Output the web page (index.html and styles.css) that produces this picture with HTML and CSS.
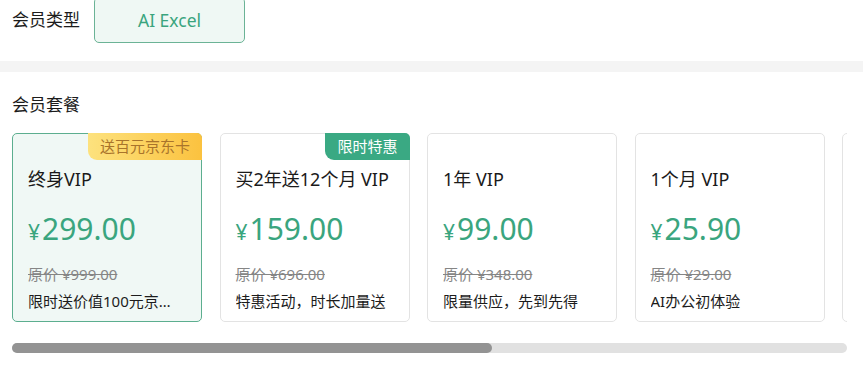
FILE: index.html
```html
<!DOCTYPE html>
<html lang="zh-CN">
<head>
<meta charset="utf-8">
<link rel="stylesheet" href="styles.css">
</head>
<body>
<div class="type-row">
  <span class="label">会员类型</span>
  <button class="type-btn">AI Excel</button>
</div>
<div class="band"></div>
<section class="plans">
  <div class="label plans-label">会员套餐</div>
  <div class="cards">
    <div class="card active">
      <span class="badge badge-gold">送百元京东卡</span>
      <div class="title">终身VIP</div>
      <div class="price"><span class="yen">¥</span>299.00</div>
      <div class="orig">原价 ¥999.00</div>
      <div class="desc">限时送价值100元京东卡</div>
    </div>
    <div class="card">
      <span class="badge badge-green">限时特惠</span>
      <div class="title">买2年送12个月 VIP</div>
      <div class="price"><span class="yen">¥</span>159.00</div>
      <div class="orig">原价 ¥696.00</div>
      <div class="desc">特惠活动，时长加量送</div>
    </div>
    <div class="card">
      <div class="title">1年 VIP</div>
      <div class="price"><span class="yen">¥</span>99.00</div>
      <div class="orig">原价 ¥348.00</div>
      <div class="desc">限量供应，先到先得</div>
    </div>
    <div class="card">
      <div class="title">1个月 VIP</div>
      <div class="price"><span class="yen">¥</span>25.90</div>
      <div class="orig">原价 ¥29.00</div>
      <div class="desc">AI办公初体验</div>
    </div>
    <div class="card card-edge"></div>
  </div>
  <div class="scroll-track"><div class="scroll-thumb"></div></div>
</section>
</body>
</html>
```
FILE: styles.css
```css
* { box-sizing: border-box; }

body {
  margin: 0;
  background: #fff;
  font-family: "Noto Sans", "Noto Sans CJK SC", sans-serif;
  color: #1c1c1c;
  overflow: hidden;
}

.type-row {
  display: flex;
  align-items: center;
  gap: 14px;
  height: 46px;
  margin-top: -3px;
  padding: 0 12px;
}

.label {
  font-size: 17px;
  line-height: 24px;
  color: #1c1c1c;
}

.type-btn {
  width: 151px;
  height: 46px;
  border: 1px solid #6bb396;
  border-radius: 5px;
  background: #eff8f4;
  color: #3aa57e;
  font-family: inherit;
  font-size: 17.5px;
  padding: 0;
}

.band {
  height: 11px;
  margin-top: 18px;
  background: #f4f4f4;
}

.plans {
  padding: 21px 0 0 0;
}

.plans-label {
  padding-left: 12px;
}

.cards {
  display: flex;
  gap: 17.5px;
  overflow: hidden;
  margin: 16px 16px 0 12px;
}

.card {
  position: relative;
  flex: 0 0 190px;
  height: 189px;
  border: 1px solid #e3e3e3;
  border-radius: 5px;
  background: #fff;
  padding: 33px 0 0 15px;
  display: flex;
  flex-direction: column;
}

.card.active {
  border-color: #5cae8f;
  background: #f0f8f5;
}

.badge {
  position: absolute;
  top: -1px;
  right: -1px;
  height: 27px;
  line-height: 27px;
  padding: 0 12px;
  font-size: 15px;
  border-radius: 0 5px 0 9px;
}

.badge-gold {
  background: linear-gradient(90deg, #fde27e, #fbc23f);
  color: #a9742b;
}

.badge-green {
  background: #3aa983;
  color: #fff;
}

.title {
  font-size: 18px;
  line-height: 24px;
  color: #1a1a1a;
  white-space: nowrap;
}

.price {
  margin-top: 18px;
  font-size: 30px;
  line-height: 40px;
  color: #3aa57e;
}

.yen {
  font-size: 21px;
  margin-right: 2px;
}

.orig {
  margin-top: 11px;
  font-size: 15px;
  line-height: 22px;
  color: #858585;
  text-decoration: line-through;
}

.desc {
  margin-top: 5px;
  font-size: 15px;
  line-height: 22px;
  color: #1c1c1c;
  white-space: nowrap;
  overflow: hidden;
  text-overflow: ellipsis;
  width: 150px;
}

.scroll-track {
  margin: 21px 16px 0 12px;
  height: 10px;
  border-radius: 5px;
  background: #e1e1e1;
}

.scroll-thumb {
  width: 480px;
  height: 10px;
  border-radius: 5px;
  background: #939393;
}
```
